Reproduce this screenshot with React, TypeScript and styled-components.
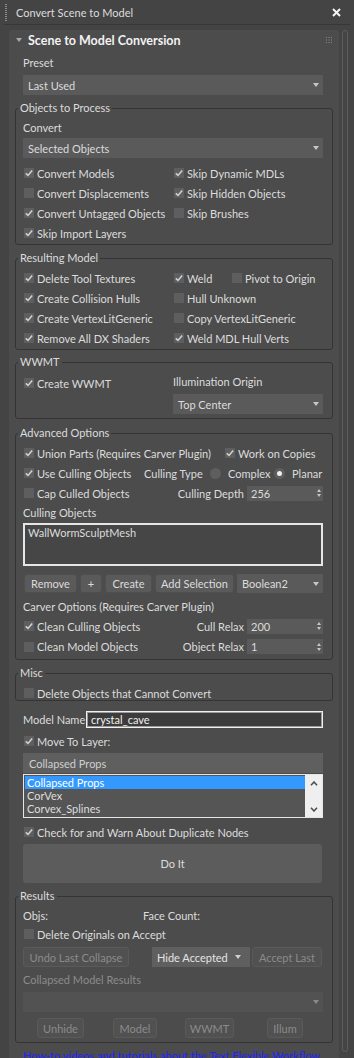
import React from "react";
import styled, { createGlobalStyle } from "styled-components";

const GlobalStyle = createGlobalStyle`
  html, body { margin: 0; padding: 0; background: #444444; }
  body { font-family: "Lato", "Liberation Sans", sans-serif; font-size: 11px; color: #dcdcdc; }
  * { box-sizing: border-box; }
`;

const Page = styled.div`
  width: 354px;
  height: 1058px;
  overflow: hidden;
  background: #444444;
  display: flex;
  flex-direction: column;
`;

const TitleBar = styled.div`
  height: 24px;
  flex: none;
  display: flex;
  align-items: center;
  padding: 0 13px 0 5px;
`;

const Grip = styled.div`
  width: 2px;
  height: 17px;
  background: repeating-linear-gradient(to bottom, #8c8c8c 0 1px, transparent 1px 2px);
`;

const TitleText = styled.div`
  margin-left: 9px;
  font-size: 11px;
  color: #dcdcdc;
`;

const Close = styled.div`
  margin-left: auto;
  display: flex;
`;

const Divider = styled.div`
  height: 1px;
  flex: none;
  margin: 0 4px;
  background: #373737;
`;

const Main = styled.div`
  display: flex;
  gap: 3px;
  padding: 5px 0 0 9px;
  flex: 1;
  min-height: 0;
`;

const Rollout = styled.div`
  width: 330px;
  flex: none;
  background: #4c4c4c;
  border-radius: 3px 3px 0 0;
  display: flex;
  flex-direction: column;
`;

const Track = styled.div`
  width: 6px;
  height: 1022px;
  flex: none;
  border: 1px solid #5c5c5c;
  border-radius: 3px;
`;

const Header = styled.div`
  height: 20px;
  flex: none;
  display: flex;
  align-items: center;
  padding: 0 7px;
`;

const Tri = styled.span`
  width: 0;
  height: 0;
  border-left: 3px solid transparent;
  border-right: 3px solid transparent;
  border-top: 4px solid #a8a8a8;
`;

const HeaderTitle = styled.span`
  margin-left: 6px;
  font-weight: 700;
  font-size: 12.5px;
  color: #f2f2f2;
`;

const HeaderGrip = styled.span`
  margin-left: auto;
  display: flex;
`;

const Body = styled.div`
  padding: 0 6px;
  display: flex;
  flex-direction: column;
`;

const Inset = styled.div<{ $mt?: number }>`
  margin: ${(p) => p.$mt ?? 0}px 10px 0 8px;
`;

const Label = styled.div<{ $mt?: number; $dim?: boolean }>`
  height: 16px;
  line-height: 16px;
  margin-top: ${(p) => p.$mt ?? 0}px;
  color: ${(p) => (p.$dim ? "#8b8b8b" : "#dcdcdc")};
  white-space: nowrap;
`;

const SelectBox = styled.div<{ $mt?: number; $w?: number; $dim?: boolean; $light?: boolean }>`
  height: 20px;
  margin-top: ${(p) => p.$mt ?? 0}px;
  width: ${(p) => (p.$w ? `${p.$w}px` : "auto")};
  flex: none;
  display: flex;
  align-items: center;
  padding: 0 4px 0 5px;
  background: ${(p) => (p.$dim ? "#525252" : p.$light ? "#5f5f5f" : "#5a5a5a")};
  color: ${(p) => (p.$light ? "#cfcfcf" : "#dcdcdc")};
  white-space: nowrap;
`;

const Arrow = styled.span<{ $dim?: boolean }>`
  margin-left: auto;
  width: 0;
  height: 0;
  border-left: 3px solid transparent;
  border-right: 3px solid transparent;
  border-top: 4px solid ${(p) => (p.$dim ? "#8a8a8a" : "#c6c6c6")};
`;

const Group = styled.fieldset<{ $mt: number }>`
  margin: ${(p) => p.$mt}px 0 0;
  padding: 0;
  border: 1px solid #343434;
  border-radius: 3px;
  min-width: 0;
`;

const Legend = styled.legend`
  margin-left: 2px;
  padding: 0 2px;
  height: 14px;
  line-height: 14px;
  font-size: 11px;
  color: #dcdcdc;
`;

const GroupBody = styled.div<{ $pt: number; $pb: number }>`
  padding: ${(p) => p.$pt}px 9px ${(p) => p.$pb}px 7px;
  display: flex;
  flex-direction: column;
`;

const Row = styled.div<{ $h?: number; $mt?: number }>`
  display: flex;
  align-items: center;
  height: ${(p) => p.$h ?? 20}px;
  margin-top: ${(p) => p.$mt ?? 0}px;
  white-space: nowrap;
`;

const Cell = styled.div<{ $w?: number }>`
  flex: none;
  width: ${(p) => (p.$w ? `${p.$w}px` : "auto")};
  display: flex;
  align-items: center;
`;

const LeftTop = styled.div`
  flex: none;
  width: 150px;
  height: 20px;
  align-self: flex-start;
  display: flex;
  align-items: center;
`;

const RightStack = styled.div`
  flex: 1;
  align-self: flex-start;
  display: flex;
  flex-direction: column;
`;

const CheckWrap = styled.div<{ $w?: number }>`
  flex: none;
  width: ${(p) => (p.$w ? `${p.$w}px` : "auto")};
  display: flex;
  align-items: center;
`;

const Box = styled.span`
  width: 10px;
  height: 10px;
  margin: 0 3px 0 1px;
  flex: none;
  background: #5e5e5e;
  display: flex;
  align-items: center;
  justify-content: center;
`;

const RadioWrap = styled.div<{ $w?: number }>`
  flex: none;
  width: ${(p) => (p.$w ? `${p.$w}px` : "auto")};
  display: flex;
  align-items: center;
`;

const RadioDot = styled.span<{ $on?: boolean }>`
  width: 11px;
  height: 11px;
  border-radius: 50%;
  background: #5e5e5e;
  margin-right: 7px;
  display: flex;
  align-items: center;
  justify-content: center;
  &::after {
    content: "";
    width: 5px;
    height: 5px;
    border-radius: 50%;
    background: ${(p) => (p.$on ? "#f0f0f0" : "transparent")};
  }
`;

const RightGroup = styled.div`
  margin-left: auto;
  display: flex;
  align-items: center;
`;

const SpinBox = styled.div`
  width: 76px;
  height: 15px;
  margin-left: 3px;
  background: #5a5a5a;
  display: flex;
  align-items: center;
  padding: 0 2px 0 4px;
`;

const SpinArrows = styled.span`
  margin-left: auto;
  display: flex;
  flex-direction: column;
  gap: 2px;
`;

const Up = styled.span`
  width: 0;
  height: 0;
  border-left: 2.5px solid transparent;
  border-right: 2.5px solid transparent;
  border-bottom: 3px solid #c6c6c6;
`;

const Down = styled.span`
  width: 0;
  height: 0;
  border-left: 2.5px solid transparent;
  border-right: 2.5px solid transparent;
  border-top: 3px solid #c6c6c6;
`;

const Btn = styled.div<{ $w: number; $ml?: number; $off?: boolean }>`
  width: ${(p) => p.$w}px;
  margin-left: ${(p) => p.$ml ?? 0}px;
  height: 100%;
  flex: none;
  display: flex;
  align-items: center;
  justify-content: center;
  border-radius: 3px;
  background: ${(p) => (p.$off ? "#515151" : "#5a5a5a")};
  border: 1px solid ${(p) => (p.$off ? "#5a5a5a" : "#4f4f4f")};
  color: ${(p) => (p.$off ? "#8b8b8b" : "#dcdcdc")};
`;

const BoolSelect = styled(SelectBox)`
  margin-left: 3px;
  height: 19px;
`;

const CullList = styled.div`
  height: 43px;
  margin-top: 2px;
  border: 2px solid #e6e6e6;
  background: #464646;
  padding: 1px 3px;
  line-height: 13px;
`;

const NameInput = styled.div`
  width: 237px;
  height: 17px;
  border: 1px solid #f0f0f0;
  box-shadow: inset 0 0 0 1px #9a9a9a;
  background: #3c3c3c;
  color: #f0f0f0;
  padding: 0 4px;
  line-height: 15px;
  display: flex;
  align-items: center;
`;

const LayerSelect = styled(SelectBox)`
  padding-left: 6px;
`;

const LayerList = styled.div`
  height: 44px;
  margin-top: 1px;
  border: 1px solid #e6e6e6;
  background: #555555;
  display: flex;
`;

const Items = styled.div`
  flex: 1;
  padding: 1px 0 0 1px;
`;

const Item = styled.div<{ $sel?: boolean }>`
  height: 13px;
  line-height: 13px;
  padding-left: 2px;
  background: ${(p) => (p.$sel ? "#3399ff" : "transparent")};
  color: ${(p) => (p.$sel ? "#ffffff" : "#dedede")};
`;

const VScroll = styled.div`
  width: 17px;
  flex: none;
  background: #efefef;
  display: flex;
  flex-direction: column;
  align-items: center;
  justify-content: space-between;
  padding: 6px 0 5px;
`;

const DoIt = styled.div`
  height: 39px;
  margin-top: 2px;
  margin-right: 1px;
  border-radius: 3px;
  background: #5c5c5c;
  display: flex;
  align-items: center;
  justify-content: center;
  color: #dcdcdc;
`;

const HideSelect = styled.div`
  width: 98px;
  margin-left: 23px;
  height: 100%;
  flex: none;
  display: flex;
  align-items: center;
  padding: 0 6px 0 5px;
  background: #5f5f5f;
  color: #e4e4e4;
  gap: 7px;
`;

const SmallArrow = styled.span`
  width: 0;
  height: 0;
  border-left: 3px solid transparent;
  border-right: 3px solid transparent;
  border-top: 4px solid #d0d0d0;
`;

const LinkText = styled.div`
  margin: 5px 10px 0 8px;
  height: 16px;
  line-height: 16px;
  color: #2222ff;
  white-space: nowrap;
`;

const Tick = () => (
  <svg width="8" height="8" viewBox="0 0 8 8">
    <path d="M0.8 4.3 L3 6.4 L7.2 1.4" stroke="#cfcfcf" strokeWidth="1.6" fill="none" />
  </svg>
);

const Check = ({ label, on, w }: { label: string; on?: boolean; w?: number }) => (
  <CheckWrap $w={w}>
    <Box>{on && <Tick />}</Box>
    <span>{label}</span>
  </CheckWrap>
);

const Radio = ({ label, on, w }: { label: string; on?: boolean; w?: number }) => (
  <RadioWrap $w={w}>
    <RadioDot $on={on} />
    <span>{label}</span>
  </RadioWrap>
);

const Spinner = ({ value }: { value: string }) => (
  <SpinBox>
    <span>{value}</span>
    <SpinArrows>
      <Up />
      <Down />
    </SpinArrows>
  </SpinBox>
);

const Chevron = ({ up }: { up?: boolean }) => (
  <svg width="8" height="5" viewBox="0 0 8 5">
    <path d={up ? "M1 4.2 L4 1 L7 4.2" : "M1 0.8 L4 4 L7 0.8"} stroke="#4a4a4a" strokeWidth="1.5" fill="none" />
  </svg>
);

export default function App() {
  return (
    <>
      <GlobalStyle />
      <Page>
        <TitleBar>
          <Grip />
          <TitleText>Convert Scene to Model</TitleText>
          <Close>
            <svg width="9" height="9" viewBox="0 0 9 9">
              <path d="M1 1 L8 8 M8 1 L1 8" stroke="#f4f4f4" strokeWidth="2" />
            </svg>
          </Close>
        </TitleBar>
        <Divider />
        <Main>
          <Rollout>
            <Header>
              <Tri />
              <HeaderTitle>Scene to Model Conversion</HeaderTitle>
              <HeaderGrip>
                <svg width="6" height="6" viewBox="0 0 6 6">
                  {[0, 2.5, 5].map((y) =>
                    [0, 2.5, 5].map((x) => <rect key={`${x}-${y}`} x={x} y={y} width="1" height="1" fill="#8a8a8a" />)
                  )}
                </svg>
              </HeaderGrip>
            </Header>
            <Body>
              <Inset $mt={5}>
                <Label>Preset</Label>
                <SelectBox $mt={4}>
                  Last Used
                  <Arrow />
                </SelectBox>
              </Inset>

              <Group $mt={6}>
                <Legend>Objects to Process</Legend>
                <GroupBody $pt={5} $pb={1}>
                  <Label>Convert</Label>
                  <SelectBox $mt={2}>
                    Selected Objects
                    <Arrow />
                  </SelectBox>
                  <Row $mt={5}>
                    <Check w={150} on label="Convert Models" />
                    <Check on label="Skip Dynamic MDLs" />
                  </Row>
                  <Row>
                    <Check w={150} label="Convert Displacements" />
                    <Check on label="Skip Hidden Objects" />
                  </Row>
                  <Row>
                    <Check w={150} on label="Convert Untagged Objects" />
                    <Check label="Skip Brushes" />
                  </Row>
                  <Row>
                    <Check on label="Skip Import Layers" />
                  </Row>
                </GroupBody>
              </Group>

              <Group $mt={6}>
                <Legend>Resulting Model</Legend>
                <GroupBody $pt={3} $pb={1}>
                  <Row>
                    <Check w={150} on label="Delete Tool Textures" />
                    <Check w={58} on label="Weld" />
                    <Check label="Pivot to Origin" />
                  </Row>
                  <Row>
                    <Check w={150} on label="Create Collision Hulls" />
                    <Check label="Hull Unknown" />
                  </Row>
                  <Row>
                    <Check w={150} on label="Create VertexLitGeneric" />
                    <Check label="Copy VertexLitGeneric" />
                  </Row>
                  <Row>
                    <Check w={150} on label="Remove All DX Shaders" />
                    <Check on label="Weld MDL Hull Verts" />
                  </Row>
                </GroupBody>
              </Group>

              <Group $mt={5}>
                <Legend>WWMT</Legend>
                <GroupBody $pt={4} $pb={4}>
                  <Row $h={41}>
                    <LeftTop>
                      <Check on label="Create WWMT" />
                    </LeftTop>
                    <RightStack>
                      <Label $mt={1}>Illumination Origin</Label>
                      <SelectBox $mt={4}>
                        Top Center
                        <Arrow />
                      </SelectBox>
                    </RightStack>
                  </Row>
                </GroupBody>
              </Group>

              <Group $mt={7}>
                <Legend>Advanced Options</Legend>
                <GroupBody $pt={3} $pb={2}>
                  <Row>
                    <Check w={201} on label="Union Parts (Requires Carver Plugin)" />
                    <Check on label="Work on Copies" />
                  </Row>
                  <Row>
                    <Check w={121} on label="Use Culling Objects" />
                    <Cell $w={66}>Culling Type</Cell>
                    <Radio w={64} label="Complex" />
                    <Radio on label="Planar" />
                  </Row>
                  <Row>
                    <Check label="Cap Culled Objects" />
                    <RightGroup>
                      <span>Culling Depth</span>
                      <Spinner value="256" />
                    </RightGroup>
                  </Row>
                  <Label $mt={2}>Culling Objects</Label>
                  <CullList>WallWormSculptMesh</CullList>
                  <Row $h={19} $mt={8}>
                    <Btn $w={53} $ml={1}>Remove</Btn>
                    <Btn $w={22} $ml={3}>+</Btn>
                    <Btn $w={47} $ml={3}>Create</Btn>
                    <Btn $w={79} $ml={3}>Add Selection</Btn>
                    <BoolSelect $w={86}>
                      Boolean2
                      <Arrow />
                    </BoolSelect>
                  </Row>
                  <Label $mt={6}>Carver Options (Requires Carver Plugin)</Label>
                  <Row $mt={1}>
                    <Check on label="Clean Culling Objects" />
                    <RightGroup>
                      <span>Cull Relax</span>
                      <Spinner value="200" />
                    </RightGroup>
                  </Row>
                  <Row $h={21}>
                    <Check label="Clean Model Objects" />
                    <RightGroup>
                      <span>Object Relax</span>
                      <Spinner value="1" />
                    </RightGroup>
                  </Row>
                </GroupBody>
              </Group>

              <Group $mt={6}>
                <Legend>Misc</Legend>
                <GroupBody $pt={6} $pb={0}>
                  <Row $h={14}>
                    <Check label="Delete Objects that Cannot Convert" />
                  </Row>
                </GroupBody>
              </Group>

              <Inset $mt={10}>
                <Row $h={17}>
                  <Cell $w={63}>Model Name</Cell>
                  <NameInput>crystal_cave</NameInput>
                </Row>
                <Row $mt={3}>
                  <Check on label="Move To Layer:" />
                </Row>
                <LayerSelect $mt={2} $light>
                  Collapsed Props
                </LayerSelect>
                <LayerList>
                  <Items>
                    <Item $sel>Collapsed Props</Item>
                    <Item>CorVex</Item>
                    <Item>Corvex_Splines</Item>
                  </Items>
                  <VScroll>
                    <Chevron up />
                    <Chevron />
                  </VScroll>
                </LayerList>
                <Row $mt={4}>
                  <Check on label="Check for and Warn About Duplicate Nodes" />
                </Row>
                <DoIt>Do It</DoIt>
              </Inset>

              <Group $mt={6}>
                <Legend>Results</Legend>
                <GroupBody $pt={4} $pb={4}>
                  <Row $h={16}>
                    <Cell $w={120}>Objs:</Cell>
                    <span>Face Count:</span>
                  </Row>
                  <Row $mt={1}>
                    <Check label="Delete Originals on Accept" />
                  </Row>
                  <Row $mt={3}>
                    <Btn $w={106} $off>Undo Last Collapse</Btn>
                    <HideSelect>
                      Hide Accepted
                      <SmallArrow />
                    </HideSelect>
                    <Btn $w={70} $ml={2} $off>Accept Last</Btn>
                  </Row>
                  <Label $mt={5} $dim>Collapsed Model Results</Label>
                  <SelectBox $mt={4} $dim>
                    <Arrow $dim />
                  </SelectBox>
                  <Row $mt={6}>
                    <Btn $w={47} $ml={14} $off>Unhide</Btn>
                    <Btn $w={44} $ml={29} $off>Model</Btn>
                    <Btn $w={49} $ml={28} $off>WWMT</Btn>
                    <Btn $w={36} $ml={33} $off>Illum</Btn>
                  </Row>
                </GroupBody>
              </Group>

              <LinkText>How-to videos and tutorials about the Text Flexible Workflow</LinkText>
            </Body>
          </Rollout>
          <Track />
        </Main>
      </Page>
    </>
  );
}
